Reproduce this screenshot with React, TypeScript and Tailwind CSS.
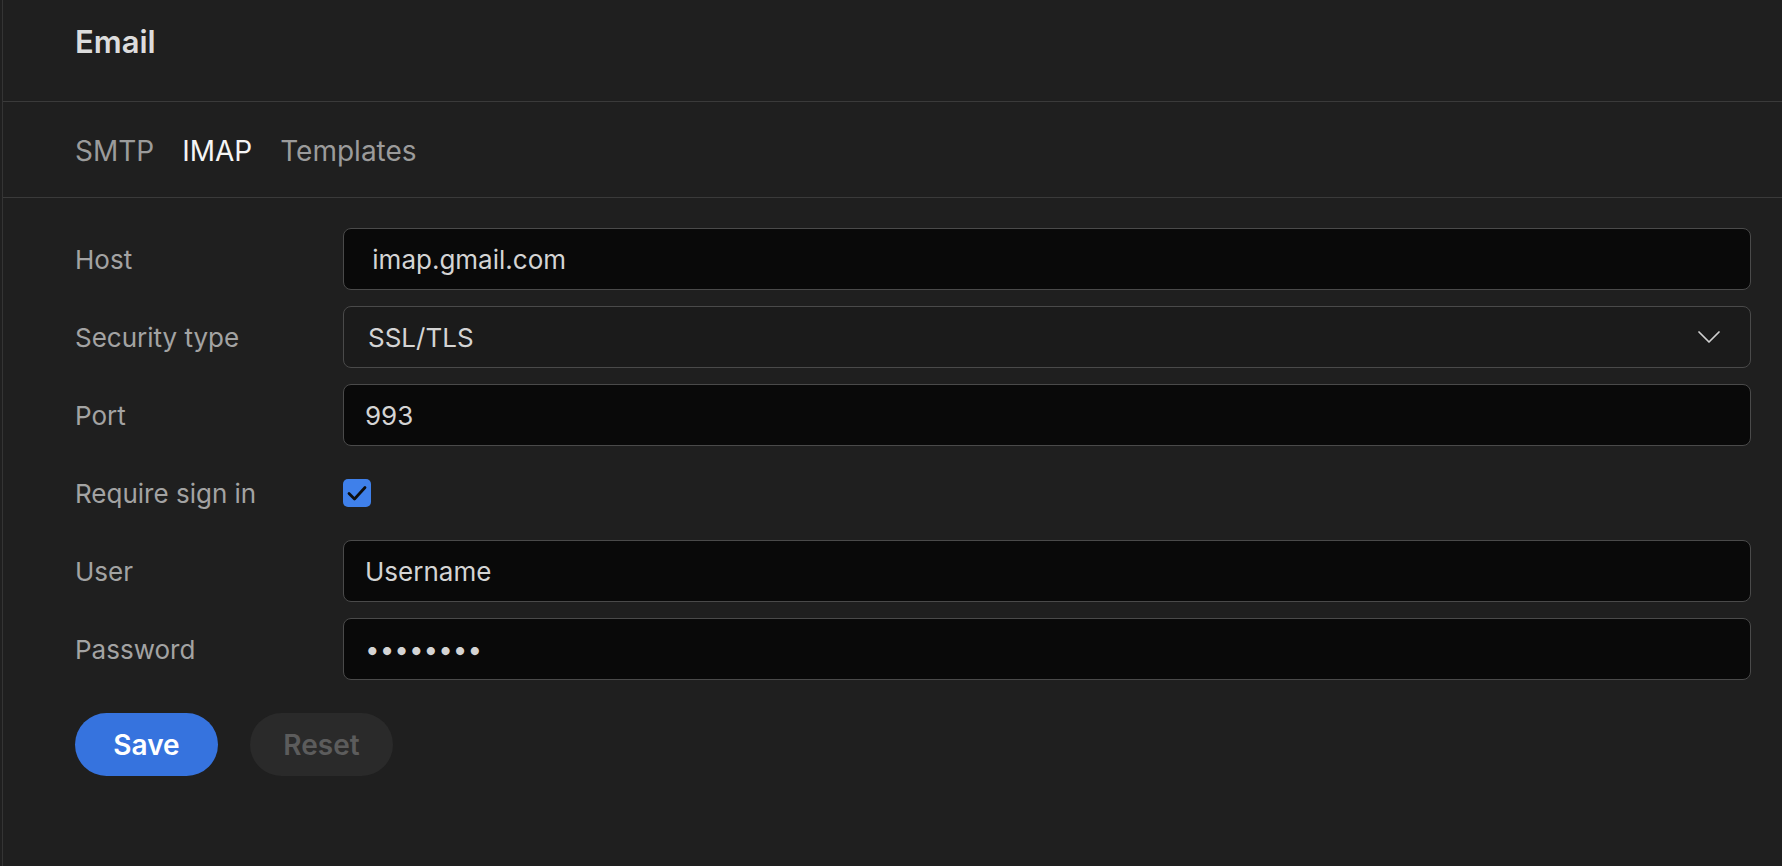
import { useState } from "react";

const rows = [
  { label: "Host", kind: "text", value: " imap.gmail.com" },
  { label: "Security type", kind: "select", value: "SSL/TLS" },
  { label: "Port", kind: "text", value: "993" },
  { label: "Require sign in", kind: "check", value: "" },
  { label: "User", kind: "text", value: "Username" },
  { label: "Password", kind: "password", value: "password" },
];

const tabs = ["SMTP", "IMAP", "Templates"];

function Chevron() {
  return (
    <svg width="22" height="12" viewBox="0 0 22 12" fill="none">
      <path d="M1 1L11 11L21 1" stroke="#d0d0d0" strokeWidth="1.7" strokeLinecap="round" strokeLinejoin="round" />
    </svg>
  );
}

function Field({ kind, value }: { kind: string; value: string }) {
  const [checked, setChecked] = useState(true);

  if (kind === "select") {
    return (
      <div className="h-[62px] w-full flex items-center justify-between rounded-lg border border-[#4a4a4a] bg-[#1b1b1b] pl-[24px] pr-[30px] text-[26px] text-[#d4d4d4]">
        <span>{value}</span>
        <Chevron />
      </div>
    );
  }

  if (kind === "check") {
    return (
      <div className="h-[62px] flex items-center">
        <button
          onClick={() => setChecked(!checked)}
          className="w-[28px] h-[28px] rounded-[5px] bg-[#3f80ea] flex items-center justify-center"
        >
          {checked && (
            <svg width="20" height="16" viewBox="0 0 20 16" fill="none">
              <path d="M2 8.5L7.5 14L18 2.5" stroke="#0d0d0d" strokeWidth="2.8" strokeLinecap="round" strokeLinejoin="round" />
            </svg>
          )}
        </button>
      </div>
    );
  }

  return (
    <input
      type={kind === "password" ? "password" : "text"}
      defaultValue={value}
      className="h-[62px] w-full rounded-lg border border-[#4a4a4a] bg-[#090909] pl-[21px] pr-4 text-[26px] text-[#d4d4d4] outline-none"
    />
  );
}

export default function App() {
  const [tab, setTab] = useState("IMAP");

  return (
    <div className="min-h-screen bg-[#1f1f1f] pl-[2px] font-['Inter',sans-serif]">
      <div className="min-h-screen border-l border-[#343434]">
        <div className="h-[102px] flex items-center pl-[72px] border-b border-[#3a3a3a]">
          <h1 className="text-[31px] font-semibold text-[#dcdcdc] mt-[-16px]">Email</h1>
        </div>

        <div className="h-[96px] flex items-center gap-[28px] pl-[72px] pt-[3px] border-b border-[#3a3a3a]">
          {tabs.map((t) => (
            <button
              key={t}
              onClick={() => setTab(t)}
              className={t === tab ? "text-[28px] text-[#f5f5f5]" : "text-[28px] text-[#9b9b9b]"}
            >
              {t}
            </button>
          ))}
        </div>

        <div className="pt-[30px] pl-[72px] pr-[31px]">
          <div className="flex flex-col gap-[16px]">
            {rows.map((r) => (
              <div key={r.label} className="flex items-center">
                <div className="w-[268px] shrink-0 text-[26px] text-[#a3a3a3]">{r.label}</div>
                <div className="flex-1">
                  <Field kind={r.kind} value={r.value} />
                </div>
              </div>
            ))}
          </div>

          <div className="flex gap-[32px] mt-[33px]">
            <button className="w-[143px] h-[63px] rounded-full bg-[#3673de] text-[28px] font-semibold text-white">
              Save
            </button>
            <button className="w-[143px] h-[63px] rounded-full bg-[#2a2a2a] text-[28px] font-semibold text-[#5c5c5c]">
              Reset
            </button>
          </div>
        </div>
      </div>
    </div>
  );
}
